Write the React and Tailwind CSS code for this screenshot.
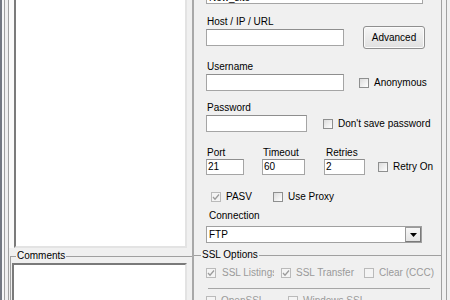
import React from "react";

function Box({ checked = false, disabled = false }) {
  return (
    <div
      className={
        disabled
          ? "w-[10px] h-[10px] shrink-0 border border-[#bababa] bg-[#f4f4f4] flex items-center justify-center"
          : "w-[10px] h-[10px] shrink-0 border border-[#8e8f8f] bg-linear-to-br from-[#dcdcdc] to-white flex items-center justify-center"
      }
    >
      {checked && (
        <svg width="8" height="8" viewBox="0 0 8 8">
          <path
            d="M1 4 L3 6.2 L7 1.5"
            fill="none"
            stroke={disabled ? "#9c9c9c" : "#333"}
            strokeWidth="1.3"
          />
        </svg>
      )}
    </div>
  );
}

function Check({ label, checked, disabled, grey, className = "" }) {
  return (
    <div className={"flex items-center gap-[5px] h-[12px] " + className}>
      <Box checked={checked} disabled={disabled} />
      <span className={grey ? "text-[#9a9a9a] whitespace-nowrap" : "whitespace-nowrap"}>{label}</span>
    </div>
  );
}

export default function App() {
  const field = "border border-[#a5a5a5] border-t-[#8e8e8e] bg-white";
  return (
    <div className="w-[450px] h-[300px] overflow-hidden bg-[#f0f0f0] flex font-['Liberation_Sans',Arial,sans-serif] text-[10px] leading-[12px] text-black">
      {/* left window edges */}
      <div className="w-[2px] shrink-0 bg-[#737882]" />
      <div className="w-[2px] shrink-0 bg-[#f7f7f7]" />
      <div className="w-[1px] shrink-0 bg-[#a0a0a0]" />
      <div className="w-[3px] shrink-0" />
      <div className="w-[1px] shrink-0 bg-[#a0a0a0]" />

      {/* left panel */}
      <div className="w-[183px] shrink-0 flex flex-col">
        <div className="h-[248px] shrink-0 flex">
          <div className="w-[5px] bg-[#fafafa]" />
          <div className="w-[173px] bg-white border-l-2 border-l-[#7a7a7a] border-r-2 border-r-[#e3e3e3] border-b-2 border-b-[#e3e3e3]" />
        </div>
        <fieldset className="mt-[2px] ml-[1px] border-t border-l border-[#a0a0a0] flex-1">
          <legend className="ml-[5px] px-[1px] leading-[12px]">Comments</legend>
          <div className="mt-[1px] ml-[1px] w-[175px] h-[60px] bg-white border-t-2 border-l-2 border-t-[#7a7a7a] border-l-[#7a7a7a] border-r-2 border-r-[#e3e3e3]" />
        </fieldset>
      </div>

      {/* divider */}
      <div className="w-[2px] shrink-0 bg-[#a8a8a8]" />

      {/* right panel */}
      <div className="w-[247px] shrink-0 flex flex-col">
        <div className="pl-[12px] flex flex-col">
          <div className={"-mt-[12px] h-[16px] w-[217px] pl-[2px] pt-[2px] leading-[14px] " + field}>New_site</div>

          {/* host */}
          <div className="mt-[12px] flex items-start">
            <div className="flex flex-col">
              <div className="pl-[1px]">Host / IP / URL</div>
              <div className={"mt-[1px] h-[17px] w-[138px] " + field} />
            </div>
            <div className="ml-[19px] mt-[10px] h-[23px] w-[62px] border border-[#8f8f8f] rounded-[3px] bg-linear-to-b from-[#f6f6f6] to-[#e0e0e0] shadow-[inset_0_0_0_1px_#fbfbfb] flex items-center justify-center">
              Advanced
            </div>
          </div>

          {/* username */}
          <div className="mt-[12px] flex items-start">
            <div className="flex flex-col">
              <div className="pl-[1px]">Username</div>
              <div className={"mt-[1px] h-[17px] w-[138px] " + field} />
            </div>
            <Check label="Anonymous" className="ml-[15px] mt-[16px]" />
          </div>

          {/* password */}
          <div className="mt-[11px] flex items-start">
            <div className="flex flex-col">
              <div className="pl-[1px]">Password</div>
              <div className={"mt-[1px] h-[17px] w-[101px] " + field} />
            </div>
            <Check label="Don't save password" className="ml-[16px] mt-[16px]" />
          </div>

          {/* port / timeout / retries */}
          <div className="mt-[15px] flex items-start">
            <div className="flex flex-col">
              <div className="pl-[1px]">Port</div>
              <div className={"h-[16px] w-[38px] pl-[1px] leading-[14px] " + field}>21</div>
            </div>
            <div className="ml-[18px] flex flex-col">
              <div className="pl-[1px]">Timeout</div>
              <div className={"h-[16px] w-[43px] pl-[1px] leading-[14px] " + field}>60</div>
            </div>
            <div className="ml-[19px] flex flex-col">
              <div className="pl-[2px]">Retries</div>
              <div className={"h-[16px] w-[41px] pl-[1px] leading-[14px] " + field}>2</div>
            </div>
            <Check label="Retry On" className="ml-[13px] mt-[14px]" />
          </div>

          {/* pasv / proxy */}
          <div className="mt-[16px] flex items-start">
            <Check label="PASV" checked disabled className="ml-[5px] w-[62px]" />
            <Check label="Use Proxy" />
          </div>

          {/* connection */}
          <div className="mt-[7px] pl-[3px]">Connection</div>
          <div className="mt-[4px] h-[17px] w-[216px] border border-[#a0a0a0] bg-white flex items-center">
            <div className="flex-1 pl-[2px]">FTP</div>
            <div className="w-[16px] h-[15px] border border-[#9a9a9a] border-r-[#7a7a7a] border-b-[#7a7a7a] bg-linear-to-b from-[#f7f7f7] to-[#e4e4e4] flex items-center justify-center">
              <svg width="7" height="4" viewBox="0 0 7 4">
                <path d="M0 0 H7 L3.5 4 Z" fill="#000" />
              </svg>
            </div>
          </div>
        </div>

        {/* SSL options */}
        <fieldset className="mt-[6px] border-t border-[#a0a0a0] flex-1">
          <legend className="ml-[7px] px-[1px] leading-[12px]">SSL Options</legend>
          <div className="pl-[12px] flex flex-col">
            <div className="mt-[6px] flex items-start">
              <div className="w-[75px] flex items-center gap-[6px] h-[12px]">
                <Box checked disabled />
                <div className="w-[52px] overflow-hidden whitespace-nowrap text-[#9a9a9a]">SSL Listings</div>
              </div>
              <Check label="SSL Transfer" checked disabled grey className="w-[83px]" />
              <Check label="Clear (CCC)" disabled grey />
            </div>
            <div className="mt-[9px] ml-[2px] w-[222px] h-[1px] bg-[#a6a6a6]" />
            <div className="mt-[6px] flex items-start">
              <Check label="OpenSSL" disabled grey className="w-[82px]" />
              <Check label="Windows SSL" disabled grey />
            </div>
          </div>
        </fieldset>
      </div>

      {/* right edges */}
      <div className="w-[1px] shrink-0 bg-[#a0a0a0]" />
      <div className="w-[4px] shrink-0" />
      <div className="w-[1px] shrink-0 bg-[#a0a0a0]" />
      <div className="w-[3px] shrink-0" />
    </div>
  );
}
